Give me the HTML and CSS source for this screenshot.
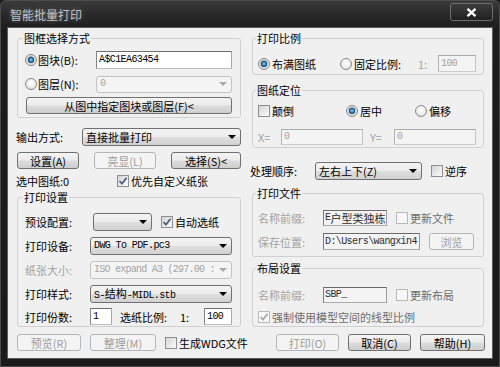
FILE: index.html
```html
<!DOCTYPE html>
<html lang="zh-CN">
<head>
<meta charset="utf-8">
<title>智能批量打印</title>
<link rel="stylesheet" href="styles.css">
</head>
<body>
<div class="window">
  <div class="titlebar">
    <span class="title">智能批量打印</span>
    <span class="close"><svg width="11" height="9" viewBox="0 0 11 9"><path d="M1.5 0.8 L9.5 8.2 M9.5 0.8 L1.5 8.2" stroke="#fff" stroke-width="2.3"/></svg></span>
  </div>
  <div class="client">
    <div class="cols">
      <div class="col col-left">
        <fieldset class="group group-left">
          <legend>图框选择方式</legend>
          <div class="row mt6 h18">
            <span class="radio on"></span>
            <span class="ml1">图块(B):</span>
            <span class="tb w136 ml-auto mono">A$C1EA63454</span>
          </div>
          <div class="row mt6 h18">
            <span class="radio"></span>
            <span class="ml1">图层(N):</span>
            <span class="combo dis w136 h17 ml-auto"><span class="val mono">0</span><span class="arrow"></span></span>
          </div>
          <div class="row mt4 h17">
            <span class="btn full">从图中指定图块或图层(F)&lt;</span>
          </div>
        </fieldset>

        <div class="row mt10 h18">
          <span>输出方式:</span>
          <span class="combo w159 ml-auto"><span class="val">直接批量打印</span><span class="arrow"></span></span>
        </div>
        <div class="row mt6 h17 spread">
          <span class="btn w62">设置(A)</span>
          <span class="btn dis w62">亮显(L)</span>
          <span class="btn w70">选择(S)&lt;</span>
        </div>
        <div class="row mt5 h14">
          <span class="w101">选中图纸:0</span>
          <span class="cb"><svg width="10" height="10" viewBox="0 0 10 10"><path d="M1.5 5 L4 7.6 L8.6 1.8" fill="none" stroke="#4a5d80" stroke-width="1.7"/></svg></span>
          <span class="ml2">优先自定义纸张</span>
        </div>

        <fieldset class="group group-left group-print mt2">
          <legend>打印设置</legend>
          <div class="row mt9 h18">
            <span class="w68">预设配置:</span>
            <span class="combo w59"><span class="val"></span><span class="arrow"></span></span>
            <span class="cb ml9"><svg width="10" height="10" viewBox="0 0 10 10"><path d="M1.5 5 L4 7.6 L8.6 1.8" fill="none" stroke="#4a5d80" stroke-width="1.7"/></svg></span>
            <span class="ml2">自动选纸</span>
          </div>
          <div class="row mt6 h18">
            <span class="w65">打印设备:</span>
            <span class="combo grow"><span class="val mono">DWG To PDF.pc3</span><span class="arrow"></span></span>
          </div>
          <div class="row mt6 h18">
            <span class="w65 dim">纸张大小:</span>
            <span class="combo dis grow"><span class="val mono tight">ISO expand A3 (297.00 :</span><span class="arrow"></span></span>
          </div>
          <div class="row mt6 h18">
            <span class="w65">打印样式:</span>
            <span class="combo grow"><span class="val mono">S-<span class="cjk">结构</span>-MIDL.stb</span><span class="arrow"></span></span>
          </div>
          <div class="row mt5 h17">
            <span class="w65">打印份数:</span>
            <span class="tb w22 mono">1</span>
            <span class="ml8 w60">选纸比例:</span>
            <span class="w24">1:</span>
            <span class="tb w28 mono">100</span>
          </div>
        </fieldset>
      </div>

      <div class="col col-right">
        <fieldset class="group group-right">
          <legend>打印比例</legend>
          <div class="row mt10 h17">
            <span class="opt w82"><span class="radio on"></span><span>布满图纸</span></span>
            <span class="opt w78"><span class="radio"></span><span>固定比例:</span></span>
            <span class="w20 dim">1:</span>
            <span class="tb dis w38 mono">100</span>
          </div>
        </fieldset>

        <fieldset class="group group-right mt8">
          <legend>图纸定位</legend>
          <div class="row mt6 h16">
            <span class="opt w88"><span class="cb"></span><span>颠倒</span></span>
            <span class="opt w69"><span class="radio on"></span><span>居中</span></span>
            <span class="opt"><span class="radio"></span><span>偏移</span></span>
          </div>
          <div class="row mt10 h16">
            <span class="w23 dim">X=</span>
            <span class="tb dis w82 mono">0</span>
            <span class="ml7 w24 dim">Y=</span>
            <span class="tb dis w82 mono">0</span>
          </div>
        </fieldset>

        <div class="row mt14 h17">
          <span class="w65">处理顺序:</span>
          <span class="combo w107"><span class="val">左右上下(Z)</span><span class="arrow"></span></span>
          <span class="cb ml9"></span>
          <span class="ml2">逆序</span>
        </div>

        <fieldset class="group group-right group-file mt7">
          <legend>打印文件</legend>
          <div class="row mt10 h16">
            <span class="w65 dim">名称前缀:</span>
            <span class="tb ro w64 mono">E<span class="cjk">户型类独栋</span></span>
            <span class="cb dis ml9"></span>
            <span class="ml2 mid">更新文件</span>
          </div>
          <div class="row mt7 h17">
            <span class="w65 dim">保存位置:</span>
            <span class="tb ro w97 mono">D:\Users\wangxin4</span>
            <span class="btn dis ml9 w45">浏览</span>
          </div>
        </fieldset>

        <fieldset class="group group-right mt4">
          <legend>布局设置</legend>
          <div class="row mt12 h16">
            <span class="w65 dim">名称前缀:</span>
            <span class="tb ro w64 mono">SBP_</span>
            <span class="cb dis ml9"></span>
            <span class="ml2 mid">更新布局</span>
          </div>
          <div class="row mt7 h14">
            <span class="cb dis"><svg width="10" height="10" viewBox="0 0 10 10"><path d="M1.5 5 L4 7.6 L8.6 1.8" fill="none" stroke="#a8a8a8" stroke-width="1.7"/></svg></span>
            <span class="ml2 mid">强制使用模型空间的线型比例</span>
          </div>
        </fieldset>
      </div>
    </div>

    <div class="footer">
      <div class="footer-left">
        <span class="btn dis w64 ml1">预览(R)</span>
        <span class="btn dis w66 ml9">整理(M)</span>
        <span class="cb ml9"></span>
        <span class="ml2">生成WDG文件</span>
      </div>
      <div class="footer-right">
        <span class="btn dis w63">打印(O)</span>
        <span class="btn w63 ml9">取消(C)</span>
        <span class="btn w65 ml9">帮助(H)</span>
      </div>
    </div>
  </div>
</div>
</body>
</html>
```

FILE: styles.css
```css
* { box-sizing: border-box; }
html, body { margin: 0; padding: 0; }
body {
  width: 500px;
  height: 367px;
  overflow: hidden;
  background: #1c1c1c;
  font-family: "Noto Sans CJK SC", "Noto Sans", sans-serif;
  font-size: 11px;
  line-height: 14px;
  color: #000;
}

.window {
  width: 500px;
  height: 367px;
  padding: 0 7px 8px;
  display: flex;
  flex-direction: column;
  border: 1px solid #4b4b4b;
  border-radius: 6px 6px 0 0;
  background: linear-gradient(#3b3b3b 0, #2a2a2a 12px, #1d1d1d 28px, #1a1a1a 100%);
}

.titlebar {
  height: 27px;
  display: flex;
  align-items: flex-start;
}
.title {
  margin: 7px 0 0 2px;
  font-size: 12px;
  line-height: 14px;
  color: #c2c2c2;
  text-shadow: 0 0 5px rgba(255, 255, 255, 0.35);
}
.close {
  margin: 2px -1px 0 auto;
  width: 43px;
  height: 18px;
  border: 1px solid #6e6e6e;
  border-radius: 3px;
  background: linear-gradient(#3c3c3c, #202020);
  display: flex;
  align-items: center;
  justify-content: center;
}

.client {
  height: 330px;
  background: #f0f0f0;
  padding: 3px 0 0 8px;
  box-shadow: 0 0 0 1px #5c5c5c;
}

.cols { display: flex; gap: 9px; }
.col-left { width: 225px; }
.col-right { width: 235px; }

.group {
  margin: 0;
  min-width: 0;
  border: 1px solid #d0d0d0;
  border-radius: 3px;
}
.group legend {
  padding: 0 1px;
  margin-left: -2px;
  font-size: 11px;
  line-height: 14px;
}
.group-left {
  width: 224px;
  margin-left: 1px;
  padding: 0 8px 3px 7px;
}
.group-left.group-print { padding-bottom: 1px; }
.group-right {
  width: 232px;
  margin-left: 2px;
  padding: 0 7px 2px 5px;
}
.group-right.group-file { padding-bottom: 6px; }

.row { display: flex; align-items: center; white-space: nowrap; }
.spread { justify-content: space-between; padding-left: 1px; }
.opt { display: flex; align-items: center; gap: 2px; flex: none; }

.h14 { height: 14px; }
.h16 { height: 16px; }
.h17 { height: 17px; }
.h18 { height: 18px; }

.mt2 { margin-top: 2px; }
.mt4 { margin-top: 4px; }
.mt5 { margin-top: 5px; }
.mt6 { margin-top: 6px; }
.mt7 { margin-top: 7px; }
.mt8 { margin-top: 8px; }
.mt9 { margin-top: 9px; }
.mt10 { margin-top: 10px; }
.mt12 { margin-top: 12px; }
.mt14 { margin-top: 14px; }

.ml1 { margin-left: 1px; }
.ml2 { margin-left: 2px; }
.ml7 { margin-left: 7px; }
.ml8 { margin-left: 8px; }
.ml9 { margin-left: 9px; }
.ml-auto { margin-left: auto; }

.dim { color: #a3a3a3; }
.mid { color: #6c6c6c; }

.mono {
  font-family: "Liberation Mono", "Noto Sans CJK SC", monospace;
  font-size: 10px;
  letter-spacing: -0.6px;
}
.mono.tight { letter-spacing: -0.75px; }
.cjk {
  font-family: "Noto Sans CJK SC", sans-serif;
  font-size: 11px;
  letter-spacing: 0;
}

/* radio buttons */
.radio {
  flex: none;
  width: 12px;
  height: 12px;
  border-radius: 50%;
  border: 1px solid #8a8a8a;
  background: radial-gradient(circle at 50% 40%, #ffffff 0, #ececec 55%, #d0d0d0 100%);
}
.radio.on {
  background: radial-gradient(circle at 50% 48%, #a9dcf5 0, #3f8cc2 1.4px, #1d4f7d 3px, #d6d6d6 3.6px, #f4f4f4 100%);
}

/* checkboxes */
.cb {
  flex: none;
  width: 12px;
  height: 12px;
  border: 1px solid #8e8e8e;
  background: linear-gradient(135deg, #d4d4d4, #fbfbfb);
  display: flex;
  align-items: center;
  justify-content: center;
}
.cb.dis {
  border-color: #b9b9b9;
  background: #f8f8f8;
}

/* push buttons */
.btn {
  flex: none;
  height: 17px;
  border: 1px solid #707070;
  border-radius: 3px;
  background: linear-gradient(#f4f4f4 0, #ebebeb 48%, #dcdcdc 52%, #cfcfcf 100%);
  display: flex;
  align-items: center;
  justify-content: center;
  white-space: nowrap;
}
.btn.dis {
  border-color: #b3b6b8;
  background: #f4f4f4;
  color: #9c9c9c;
}
.btn.full { width: 206px; margin-left: 1px; }

/* combo boxes */
.combo {
  flex: none;
  height: 18px;
  display: flex;
  align-items: center;
  padding: 0 4px 0 3px;
  border: 1px solid #707070;
  border-radius: 3px;
  background: linear-gradient(#f4f4f4 0, #ececec 48%, #dedede 52%, #d2d2d2 100%);
  overflow: hidden;
}
.combo.h17 { height: 17px; }
.combo .val { flex: 1; overflow: hidden; white-space: nowrap; }
.combo .arrow {
  flex: none;
  margin-left: 2px;
  width: 0;
  height: 0;
  border-left: 4px solid transparent;
  border-right: 4px solid transparent;
  border-top: 4px solid #000;
}
.combo.dis {
  border-color: #c3c3c3;
  background: #f4f4f4;
  color: #a3a3a3;
}
.combo.dis .arrow { border-top-color: #a8a8a8; }

/* text boxes */
.tb {
  flex: none;
  height: 100%;
  display: flex;
  align-items: center;
  padding: 0 2px;
  border: 1px solid;
  border-color: #6f6f6f #a9a9a9 #bdbdbd #858585;
  background: #fff;
  overflow: hidden;
  white-space: nowrap;
}
.tb.dis {
  border-color: #a9a9a9 #c4c4c4 #cccccc #b3b3b3;
  background: #f4f4f4;
  color: #a3a3a3;
}
.tb.ro {
  border-color: #6a6a6a #9c9c9c #aaaaaa #7c7c7c;
  background: #f4f4f4;
  color: #2c2c2c;
  padding: 0 1px;
}

/* fixed widths (declared after components so they win) */
.w20 { width: 20px; flex: none; }
.w22 { width: 22px; flex: none; }
.w23 { width: 23px; flex: none; }
.w24 { width: 24px; flex: none; }
.w28 { width: 28px; flex: none; }
.w38 { width: 38px; flex: none; }
.w45 { width: 45px; flex: none; }
.w59 { width: 59px; flex: none; }
.w60 { width: 60px; flex: none; }
.w62 { width: 62px; flex: none; }
.w63 { width: 63px; flex: none; }
.w64 { width: 64px; flex: none; }
.w65 { width: 65px; flex: none; }
.w66 { width: 66px; flex: none; }
.w68 { width: 68px; flex: none; }
.w69 { width: 69px; flex: none; }
.w70 { width: 70px; flex: none; }
.w78 { width: 78px; flex: none; }
.w82 { width: 82px; flex: none; }
.w88 { width: 88px; flex: none; }
.w97 { width: 97px; flex: none; }
.w101 { width: 101px; flex: none; }
.w107 { width: 107px; flex: none; }
.w136 { width: 136px; flex: none; }
.w159 { width: 159px; flex: none; }
.grow { flex: 1 1 0; min-width: 0; }

/* footer */
.footer {
  margin-top: 7px;
  height: 17px;
  display: flex;
  align-items: center;
}
.footer-left { display: flex; align-items: center; white-space: nowrap; }
.footer-right { display: flex; align-items: center; margin-left: auto; margin-right: 7px; }
```
